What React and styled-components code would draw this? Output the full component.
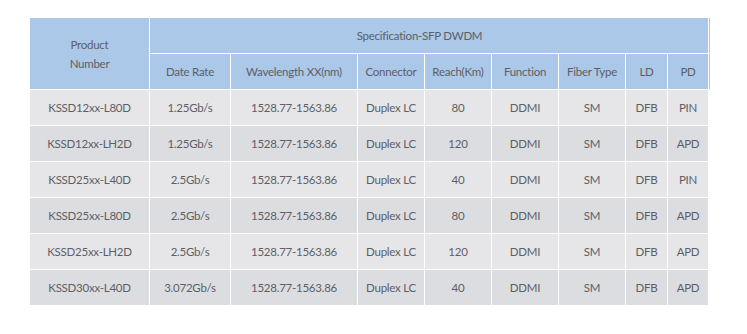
import styled, { createGlobalStyle } from "styled-components";

const GlobalStyle = createGlobalStyle`
  html, body {
    margin: 0;
    padding: 0;
    background: #fff;
  }
  body {
    font-family: Lato, "Liberation Sans", sans-serif;
  }
`;

const HEAD_BLUE = "#abc8e8";
const TEXT = "#5e5e66";

const columns = [
  "Date Rate",
  "Wavelength XX(nm)",
  "Connector",
  "Reach(Km)",
  "Function",
  "Fiber Type",
  "LD",
  "PD",
];

const rows = [
  ["KSSD12xx-L80D", "1.25Gb/s", "1528.77-1563.86", "Duplex LC", "80", "DDMI", "SM", "DFB", "PIN"],
  ["KSSD12xx-LH2D", "1.25Gb/s", "1528.77-1563.86", "Duplex LC", "120", "DDMI", "SM", "DFB", "APD"],
  ["KSSD25xx-L40D", "2.5Gb/s", "1528.77-1563.86", "Duplex LC", "40", "DDMI", "SM", "DFB", "PIN"],
  ["KSSD25xx-L80D", "2.5Gb/s", "1528.77-1563.86", "Duplex LC", "80", "DDMI", "SM", "DFB", "APD"],
  ["KSSD25xx-LH2D", "2.5Gb/s", "1528.77-1563.86", "Duplex LC", "120", "DDMI", "SM", "DFB", "APD"],
  ["KSSD30xx-L40D", "3.072Gb/s", "1528.77-1563.86", "Duplex LC", "40", "DDMI", "SM", "DFB", "APD"],
];

function App() {
  return (
    <>
      <GlobalStyle />
      <Page>
        <Table>
          <HeadCell $rowSpan={2}>
            Product
            <br />
            Number
          </HeadCell>
          <HeadCell $colSpan={8} $edge $shift>
            Specification-SFP DWDM
          </HeadCell>
          {columns.map((c, i) => (
            <HeadCell key={c} $edge={i === columns.length - 1}>
              {c}
            </HeadCell>
          ))}
          {rows.map((r, ri) =>
            r.map((v, ci) => (
              <Cell key={ri + "-" + ci} $dark={ri % 2 === 1}>
                {v}
              </Cell>
            ))
          )}
        </Table>
      </Page>
    </>
  );
}

export default App;

const Page = styled.div`
  padding: 18px 0 0 30px;
`;

const Table = styled.div`
  display: grid;
  grid-template-columns: 119px 80px 126px 66px 66px 66px 66px 41px 40px;
  grid-auto-rows: 35px;
  gap: 1px;
  width: 678px;
  background: #fff;
`;

const HeadCell = styled.div`
  grid-row: ${(p) => (p.$rowSpan ? `span ${p.$rowSpan}` : "auto")};
  grid-column: ${(p) => (p.$colSpan ? `span ${p.$colSpan}` : "auto")};
  display: flex;
  align-items: center;
  justify-content: center;
  text-align: center;
  padding-right: ${(p) => (p.$shift ? "19px" : "0")};
  background: ${HEAD_BLUE};
  color: ${TEXT};
  font-size: 11.5px;
  line-height: 19px;
  letter-spacing: -0.25px;
  white-space: nowrap;
  box-shadow: ${(p) => (p.$edge ? `1px 0 0 #fff, 2px 0 0 ${HEAD_BLUE}` : "none")};
`;

const Cell = styled.div`
  display: flex;
  align-items: center;
  justify-content: center;
  background: ${(p) => (p.$dark ? "#dcdde0" : "#e6e6e8")};
  color: ${TEXT};
  font-size: 11.5px;
  letter-spacing: -0.25px;
  white-space: nowrap;
`;
